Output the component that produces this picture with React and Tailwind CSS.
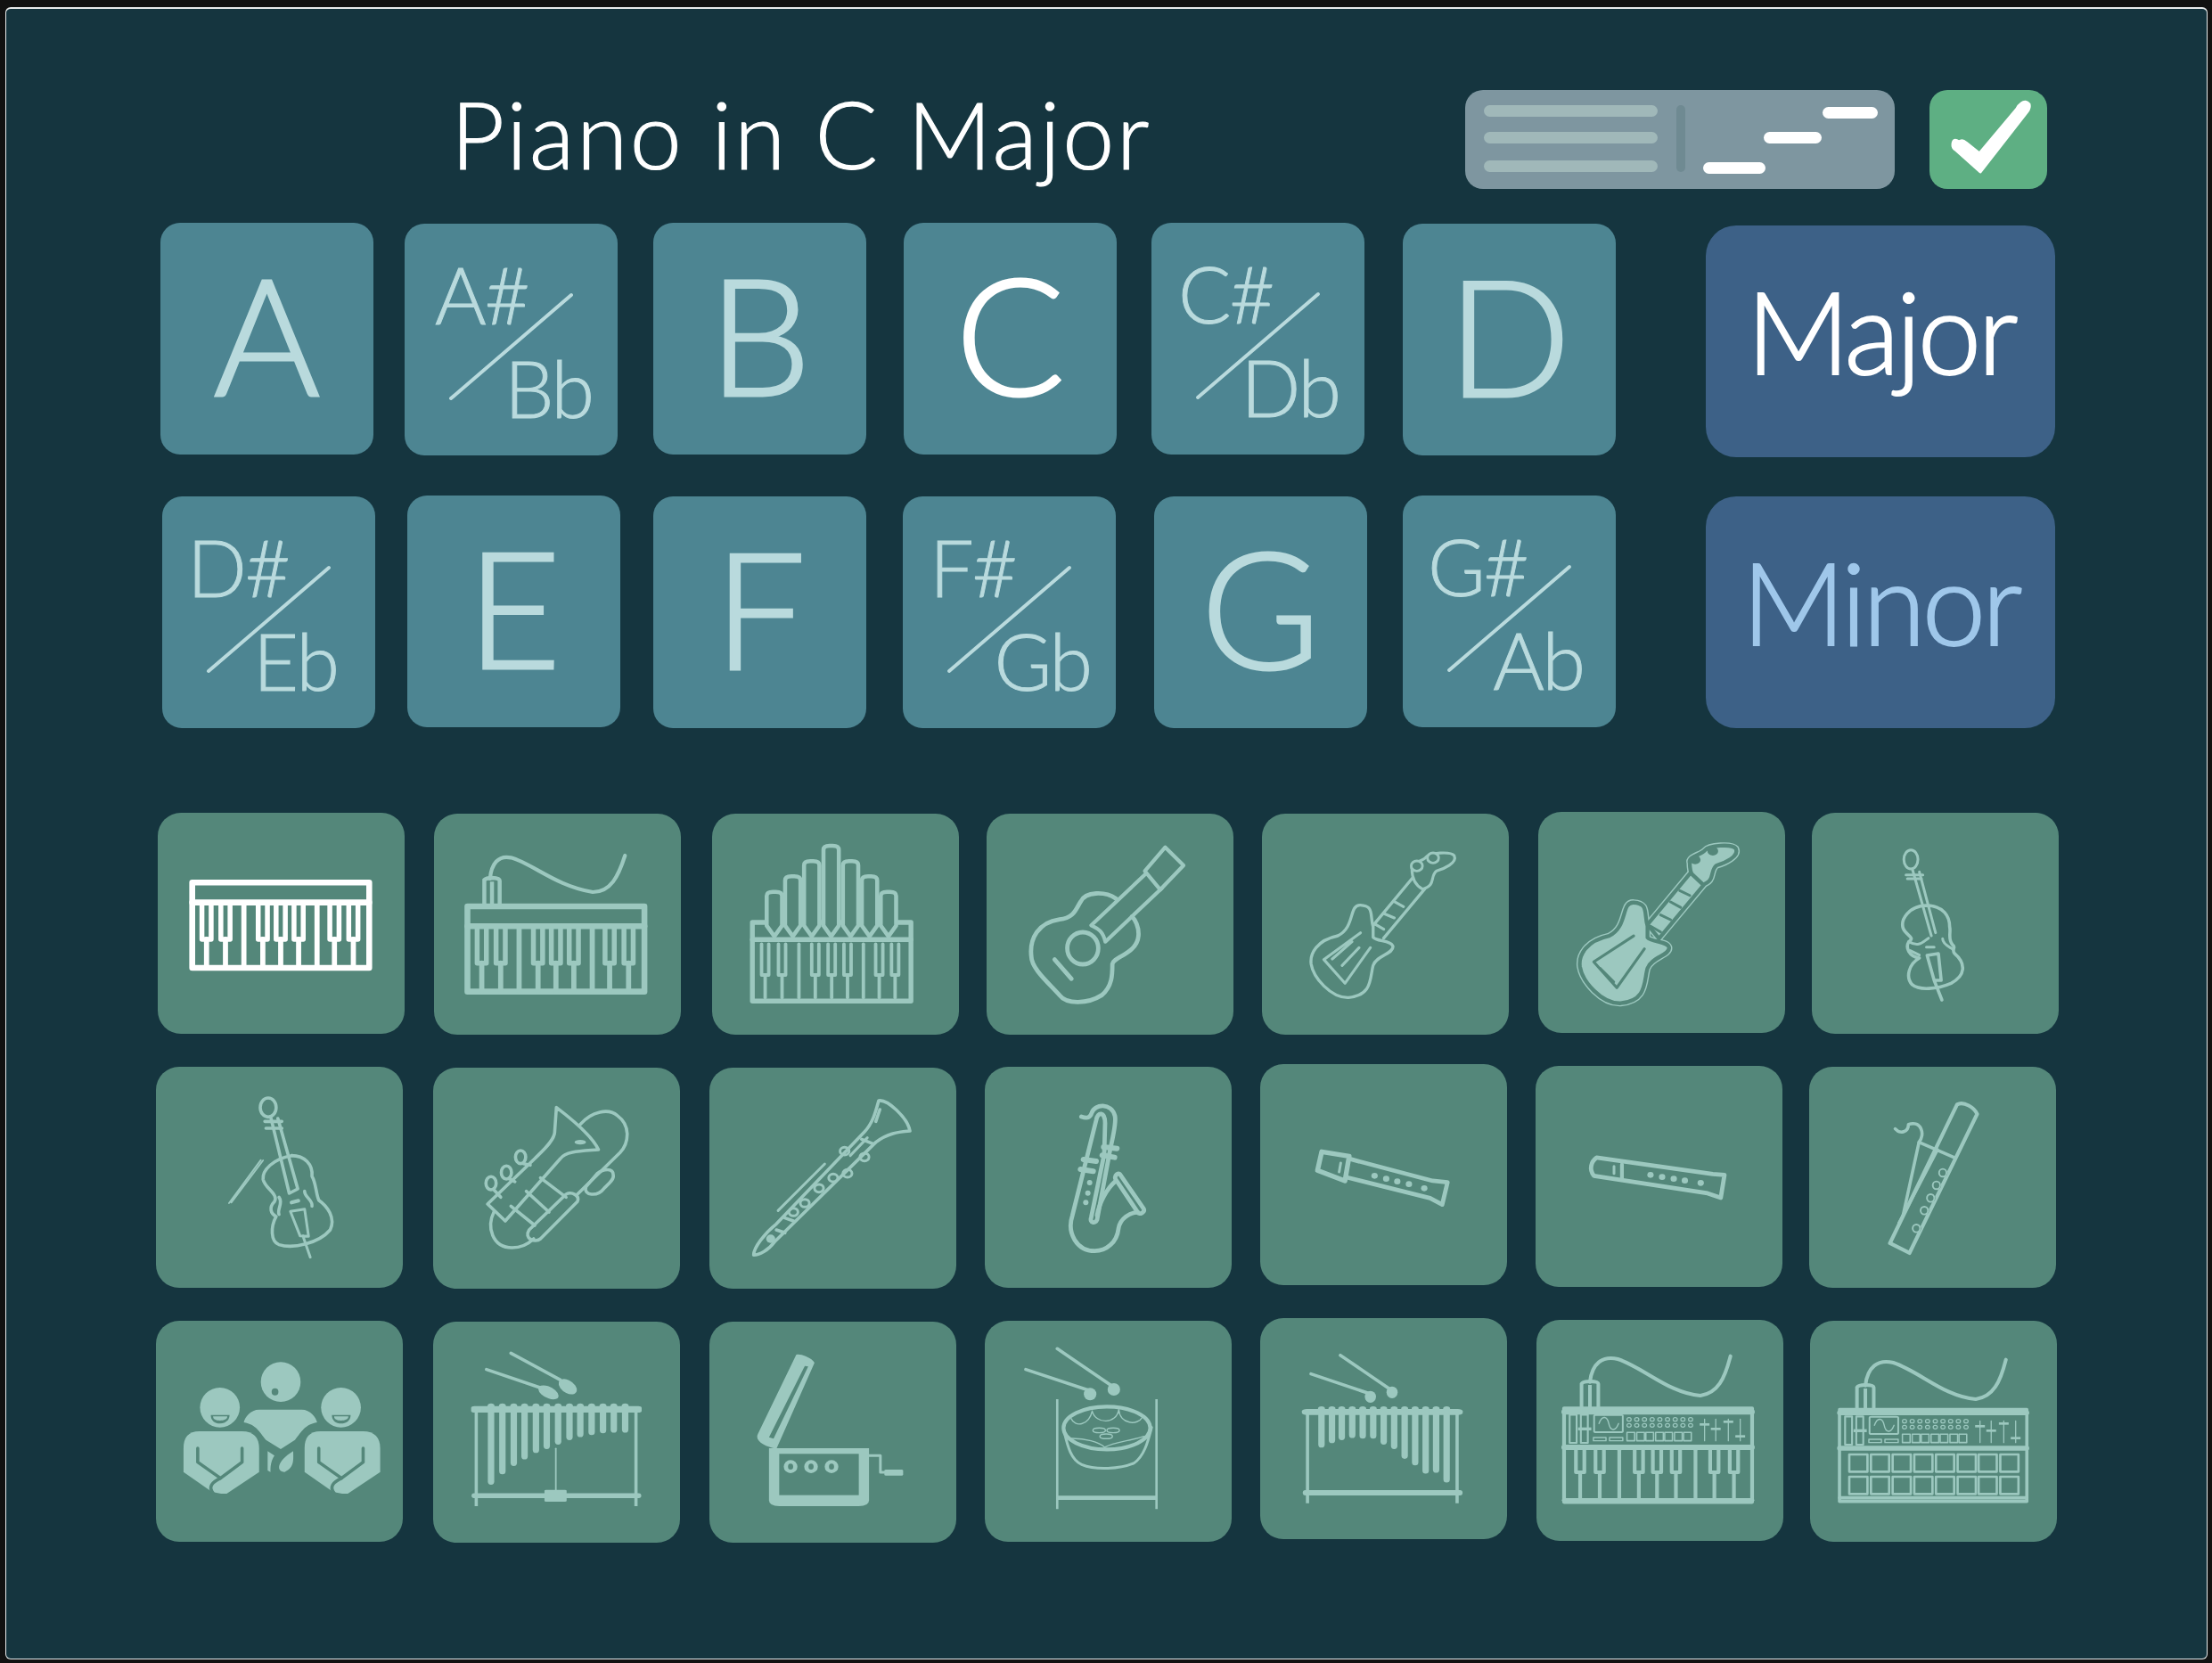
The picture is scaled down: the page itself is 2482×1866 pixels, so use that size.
import React from "react";

const C = "#9cc8bf";
const T = "#54877a";
const K = 1.2;

const P = ({ sw = 3.5, stroke = C, fill = "none", ...r }) => (
  <path vectorEffect="non-scaling-stroke" fill={fill} stroke={fill !== "none" && stroke === C && sw === 3.5 ? "none" : stroke} strokeWidth={sw * K} strokeLinecap="round" strokeLinejoin="round" {...r} />
);
const E = ({ cx, cy, rx, ry, sw = 3, stroke = C, fill = "none", rot }) => (
  <ellipse vectorEffect="non-scaling-stroke" cx={cx} cy={cy} rx={rx} ry={ry} fill={fill} stroke={stroke} strokeWidth={sw * K} transform={rot ? `rotate(${rot} ${cx} ${cy})` : undefined} />
);
const F = ({ cx, cy, rx, ry, fill = C, rot }) => (
  <ellipse cx={cx} cy={cy} rx={rx} ry={ry} fill={fill} transform={rot ? `rotate(${rot} ${cx} ${cy})` : undefined} />
);

const Z3 = "translate(160 900) scale(0.574 0.3333)";
const Z4 = "translate(1090 900) scale(0.7908 0.3333)";
const Z5 = "translate(160 1190) scale(0.6378 0.3333)";
const Z6 = "translate(1400 1190) scale(0.5931 0.3333)";
const Z7 = "translate(160 1470) scale(0.6378 0.3333)";
const Z8 = "translate(1100 1470) scale(0.7844 0.3333)";
const Z11 = "translate(1105 1197) scale(0.3333)";

function Keys({ blacks, plain, top, blackBot, bot, hw, c = C, sw = 4, dsw = 3.5 }) {
  return (
    <g>
      {blacks.map((x) => (
        <g key={x}>
          <P stroke={c} sw={sw} d={`M${x - hw} ${top} V${blackBot} H${x + hw} V${top}`} />
          <P stroke={c} sw={dsw} d={`M${x} ${blackBot} V${bot}`} />
        </g>
      ))}
      {plain.map((x) => (
        <P key={x} stroke={c} sw={dsw} d={`M${x} ${top} V${bot}`} />
      ))}
    </g>
  );
}

function PianoDraw({ c, dx = 0, dy = 0 }) {
  return (
    <g transform={`translate(${dx} ${dy})`}>
      <P stroke={c} sw={5.5} d="M97 271 H443 V558 H97 Z" />
      <P stroke={c} sw={5.5} d="M97 338 H443" />
      <Keys c={c} blacks={[125, 162, 235, 270, 305, 375, 412]} plain={[198, 341]} top={345} blackBot={462} bot={555} hw={9} sw={4.6} dsw={4.8} />
    </g>
  );
}

function Piano() {
  return (
    <g transform={Z3}>
      <PianoDraw c="#ffffff" />
    </g>
  );
}

function Keyboard() {
  return (
    <g transform={Z3}>
      <PianoDraw c={C} dx={538} dy={80} />
      <path d="M668 342 V262 Q672 255 683 255 Q698 256 698 265 V342 M683 268 V342" fill="none" stroke={C} strokeWidth="4.5" vectorEffect="non-scaling-stroke" />
      <P sw={3.5} d="M679 258 C682 208 695 178 720 187 C760 205 810 285 880 303 C915 303 930 250 943 180" />
    </g>
  );
}

function Organ() {
  const pipes = [[1235, 302], [1271, 250], [1308, 199], [1346, 147], [1384, 199], [1421, 250], [1458, 302]];
  return (
    <g transform={Z3}>
      <P sw={4.5} d="M1192 405 H1502 V670 H1192 Z" />
      <P sw={4.5} d="M1192 463 H1502" />
      <P sw={3} d="M1228 387 H1465" strokeDasharray="9 11" strokeLinecap="butt" />
      {pipes.map(([x, y]) => (
        <P key={x} sw={3.8} fill={T} stroke={C} d={`M${x - 15} 416 V${y + 14} Q${x - 15} ${y} ${x - 3} ${y} H${x + 3} Q${x + 15} ${y} ${x + 15} ${y + 14} V416 L${x} 452 Z`} />
      ))}
      <Keys blacks={[1217, 1250, 1315, 1347, 1378, 1440, 1471]} plain={[1283, 1409]} top={478} blackBot={582} bot={658} hw={7} sw={3.2} dsw={3.2} />
    </g>
  );
}

function Guitar() {
  return (
    <g transform={Z4}>
      <P sw={3.5} d="M275 152 L301 213 L268 295 L246 232 Z" />
      <P sw={3.5} d="M248 240 L170 415 C178 425 186 430 190 470 L270 290" />
      <P sw={4} d="M205 325 C190 300 162 300 155 335 C148 360 146 390 125 395 C95 405 82 460 85 520 C85 560 110 610 125 650 C135 682 165 680 185 650 C200 620 200 580 200 545 C202 520 235 510 237 450 C238 420 232 395 228 385" />
      <E cx={158} cy={492} rx={22} ry={54} sw={4} />
      <P sw={4} d="M118 530 L142 595" />
    </g>
  );
}

const BASS_BODY = "M570 420 C565 380 572 350 552 347 C535 345 545 420 520 450 C490 465 480 510 482 545 C485 590 510 660 535 658 C570 650 565 590 570 550 C575 515 600 510 598 485 C595 465 575 470 570 455 Z";
const BASS_HEAD = "M625 225 C622 205 640 200 645 185 C650 170 680 165 685 180 C690 205 670 225 660 232 C650 250 660 280 640 293 C630 280 625 260 625 225 Z";

function Bass() {
  return (
    <g transform={Z4}>
      <P sw={2.6} d={BASS_HEAD} />
      <F cx={632} cy={215} rx={9} ry={19} fill={T} />
      <F cx={655} cy={188} rx={9} ry={19} fill={T} />
      <E cx={632} cy={215} rx={8} ry={17} sw={2.4} />
      <E cx={655} cy={188} rx={8} ry={17} sw={2.4} />
      <P sw={2.8} d="M626 255 L570 415 M643 293 L585 458" />
      <P sw={2.6} d="M600 335 L613 352 M585 375 L600 390 M572 410 L585 428" />
      <P sw={2.8} d={BASS_BODY} />
      <P sw={2.6} d="M552 440 L500 530 L530 610 L566 490 M540 470 L512 528 M550 490 L526 550" />
    </g>
  );
}

function Bass2() {
  const tf = "translate(338 -40) scale(1.09 1.09)";
  return (
    <g transform={Z4}>
      <g transform={tf}>
        <P sw={6} d={BASS_HEAD} />
        <P sw={6} d="M626 255 L570 415 L585 458 L643 293 Z" />
        <P sw={6} d={BASS_BODY} />
        <P sw={3.6} stroke={T} fill={C} d={BASS_HEAD} />
        <P sw={3.6} stroke={T} fill={C} d="M626 255 L570 415 L585 458 L643 293 Z" />
        <P sw={3.6} stroke={T} fill={C} d={BASS_BODY} />
        <F cx={632} cy={215} rx={7} ry={14} fill={T} />
        <F cx={655} cy={188} rx={7} ry={14} fill={T} />
        <P sw={2.5} stroke={T} d="M612 310 L625 325 M600 345 L613 362 M587 385 L600 400 M574 420 L587 438" />
        <P sw={2.6} stroke={T} d="M552 450 L500 530 L530 610 L566 490 M508 550 L526 592" />
      </g>
    </g>
  );
}

function CelloSmall() {
  return (
    <g transform={Z4}>
      <E cx={1333} cy={193} rx={10} ry={32} sw={2.5} />
      <P sw={2.5} d="M1326 245 H1350 M1328 258 H1348" />
      <P sw={2.5} d="M1335 225 L1362 450 M1345 235 L1368 440" />
      <P sw={3} d="M1355 348 C1330 350 1318 395 1322 425 C1326 450 1340 455 1330 470 C1325 490 1330 520 1345 525 C1330 545 1325 590 1335 615 C1345 635 1370 630 1390 610 C1410 585 1412 545 1395 510 C1390 495 1398 490 1392 480 C1385 460 1390 440 1388 420 C1388 385 1380 350 1355 348" />
      <P sw={3} d="M1356 516 L1372 510 L1376 600 L1366 600 Z M1366 600 L1377 666" />
      <P sw={2.5} d="M1330 470 C1345 490 1350 470 1358 458 M1378 460 C1378 480 1390 490 1392 495 M1332 500 L1345 515 M1355 488 H1366" />
    </g>
  );
}

function Cello() {
  return (
    <g transform={Z5}>
      <E cx={221} cy={158} rx={14} ry={32} sw={3} />
      <P sw={3} d="M215 205 H245 M217 228 H245" />
      <P sw={3} d="M226 195 L258 447 L273 432 L238 195" />
      <P sw={3} d="M262 320 C230 330 210 370 212 400 C215 430 240 450 232 475 C222 495 225 515 235 525 C225 560 225 610 240 620 C265 635 310 615 330 570 C340 530 325 490 310 470 C305 450 305 410 298 390 C300 350 285 320 262 320" />
      <P sw={2.5} d="M260 508 L285 500 L292 592 L277 590 Z M282 590 L295 662" />
      <P sw={3} d="M240 460 C248 480 236 500 240 518 M285 440 C285 460 300 470 298 490" />
      <P sw={3.5} d="M262 478 L274 472" />
      <P sw={1.6} d="M208 335 L152 480 M212 336 L156 478" />
    </g>
  );
}

function Euphonium() {
  return (
    <g transform={Z5}>
      <P sw={3} d="M728 158 L725 240 C725 270 700 310 690 330 L607 483 L638 540 L735 330 C745 305 770 305 802 300 C790 250 750 190 728 158 Z" />
      <P sw={3} d="M770 215 C790 170 820 160 835 185 C860 220 855 280 840 310 L765 450" />
      <P sw={3} d="M618 510 C605 560 615 630 650 630 C668 630 680 615 688 600" />
      <P sw={3} d="M680 570 L745 450 C755 440 770 455 765 475 L700 600 C690 615 670 600 680 570 Z" />
      <P sw={3} d="M800 380 C810 365 828 360 828 385 C830 400 820 415 812 430 C800 460 775 455 780 425 Z" />
      <P sw={3} d="M648 490 L690 555 M675 440 L715 510 M700 395 L745 460" />
      <E cx={613} cy={413} rx={9} ry={22} sw={3} />
      <E cx={640} cy={377} rx={9} ry={22} sw={3} />
      <E cx={665} cy={325} rx={9} ry={22} sw={3} />
      <P sw={3} d="M618 435 L630 460 M645 398 L655 408 M670 347 L682 352" />
      <F cx={770} cy={275} rx={10} ry={8} />
    </g>
  );
}

function Clarinet() {
  const holes = [[1235, 305], [1270, 325], [1240, 380], [1215, 395], [1190, 430], [1165, 480], [1145, 510]];
  return (
    <g transform={Z5}>
      <P sw={3} d="M1295 135 C1310 130 1345 190 1350 237 C1330 240 1310 245 1290 275 L1112 610 C1100 640 1085 655 1075 655 C1075 630 1095 580 1115 550 L1270 240 C1285 210 1290 170 1295 135 Z" />
      <P sw={2.5} d="M1200 348 L1118 505 M1275 260 L1245 320" />
      <P sw={3} d="M1290 205 L1297 165 M1265 265 L1285 280 M1130 530 L1145 540 M1115 570 L1130 580" />
      {holes.map(([x, y]) => (
        <E key={x} cx={x} cy={y} rx={8} ry={13} sw={2.5} />
      ))}
      <F cx={1105} cy={600} rx={8} ry={14} />
    </g>
  );
}

function Sax() {
  return (
    <g transform={Z11}>
      <P sw={4} d="M325 168 C345 175 355 172 360 155 C370 125 425 120 438 165 C445 190 425 260 418 300 L378 515 C372 530 352 525 358 508 L402 295 L405 190 C405 150 380 150 375 180 L340 320 L295 500 C275 560 310 620 370 620 C410 620 445 590 450 545 C455 510 490 490 515 490" />
      <P sw={4} d="M378 500 C385 460 410 410 440 385" />
      <P sw={4} d="M455 362 L535 478 C540 490 520 500 515 490 L440 378 C435 365 450 355 455 362 Z" />
      <P sw={5} d="M332 312 L375 318 M322 345 L365 352 M400 270 L445 275 M395 298 L437 305" />
      <F cx={353} cy={390} rx={9} ry={9} />
      <F cx={347} cy={425} rx={9} ry={9} />
      <F cx={340} cy={457} rx={9} ry={9} />
    </g>
  );
}

function Recorder1() {
  return (
    <g transform={Z6}>
      <P sw={4.5} d="M140 307 L192 322 L184 405 L132 370 Z" />
      <P sw={4} d="M195 332 L350 405 L378 410 L368 485 L345 463 L187 393" />
      <P sw={2.5} d="M176 345 L173 375" />
      {[[240, 388], [262, 398], [283, 407], [305, 416], [334, 430]].map(([x, y]) => (
        <F key={x} cx={x} cy={y} rx={6} ry={10} />
      ))}
    </g>
  );
}

function Recorder2() {
  return (
    <g transform={Z6}>
      <P sw={4} d="M660 327 L880 382 L902 385 L895 462 L870 447 L655 388 C645 365 650 340 660 327 Z" />
      <P sw={3.5} d="M708 350 L708 396" />
      <P sw={2.5} d="M693 356 L693 380" />
      {[[762, 385], [784, 392], [806, 398], [827, 404], [857, 412]].map(([x, y]) => (
        <F key={x} cx={x} cy={y} rx={6} ry={10} />
      ))}
    </g>
  );
}

function Bassoon() {
  return (
    <g transform={Z6}>
      <P sw={3.5} d="M1342 148 C1355 135 1375 160 1380 180 L1252 648 L1215 615 Z" />
      <P sw={3} d="M1225 230 C1235 250 1250 240 1250 215 C1275 200 1282 250 1270 275 L1240 520" />
      <P sw={3} d="M1270 275 L1336 326 M1305 300 L1232 548" />
      {[[1315, 378], [1303, 420], [1292, 463], [1280, 505], [1265, 565]].map(([x, y]) => (
        <g key={x}>
          <F cx={x} cy={y} rx={9} ry={15} fill={T} />
          <E cx={x} cy={y} rx={7} ry={13} sw={1.6} />
        </g>
      ))}
    </g>
  );
}

function Person({ dx }) {
  return (
    <g transform={`translate(${dx} 0)`}>
      <F cx={136} cy={328} rx={35} ry={67} />
      <path d="M120 353 H153 C153 372 145 382 136 382 C127 382 120 372 120 353 Z" fill={T} />
      <path d="M124 358 H149 C149 368 143 372 136 372 C129 372 124 368 124 358 Z" fill={C} />
      <path d="M100 408 H175 C195 408 205 430 205 465 V545 L148 618 H138 L122 612 L72 545 V465 C72 430 80 408 100 408 Z" fill={C} />
      <P stroke={T} sw={3} d="M97 465 V512 L137 566 L175 512 V465" />
      <P stroke={T} sw={3} d="M137 566 C122 580 115 595 124 616" />
    </g>
  );
}

function Choir() {
  return (
    <g transform={Z7}>
      <F cx={243} cy={242} rx={35} ry={67} />
      <F cx={233} cy={275} rx={6} ry={12} fill={T} />
      <path d="M205 335 H280 C295 335 305 360 307 378 C285 385 280 410 268 437 L243 468 L217 437 C205 410 200 385 178 378 C180 360 190 335 205 335 Z" fill={C} />
      <path d="M220 475 L232 490 C225 510 225 530 225 545 L220 540 Z M265 475 C265 500 268 530 250 545 C235 545 235 510 265 475 Z" fill={C} />
      <Person dx={0} />
      <Person dx={213} />
    </g>
  );
}

function Vibes() {
  const bars = [[613, 585], [633, 550], [653, 522], [672, 500], [692, 478], [711, 465], [731, 450], [751, 435], [770, 425], [790, 418], [810, 412], [829, 410], [849, 410]];
  return (
    <g transform={Z7}>
      <P sw={3} d="M648 145 L735 235 M605 200 L705 265" />
      <F cx={748} cy={258} rx={14} ry={27} rot={-20} />
      <F cx={714} cy={277} rx={14} ry={26} rot={-30} />
      <rect x="578" y="323" width="300" height="22" rx="6" fill={C} />
      {bars.map(([x]) => (
        <F key={x} cx={x} cy={322} rx={6} ry={8} />
      ))}
      <P sw={3} strokeLinecap="butt" d="M587 330 V660 M868 330 V660" />
      {bars.map(([x, y]) => (
        <P key={x} sw={6} d={`M${x} 340 V${y - 8}`} />
      ))}
      <P sw={1.5} d="M727 466 V610" />
      <P sw={4.5} d="M583 625 H873" />
      <rect x="707" y="605" width="39" height="40" rx="3" fill={C} />
    </g>
  );
}

function MusicBox() {
  return (
    <g transform={Z7}>
      <path d="M1150 150 C1160 145 1180 165 1182 178 L1115 467 C1095 460 1075 440 1083 415 Z" fill={C} />
      <path d="M1165 188 L1102 428 L1110 433 L1171 190 Z" fill={T} />
      <path d="M1102 465 H1278 V640 Q1278 660 1260 660 H1120 Q1102 660 1102 640 Z" fill={C} />
      <rect x="1120" y="484" width="140" height="139" fill={T} />
      {[1140, 1176, 1212].map((x) => (
        <g key={x}>
          <F cx={x} cy={527} rx={12} ry={22} />
          <F cx={x} cy={527} rx={4.5} ry={10} fill={T} />
        </g>
      ))}
      <P sw={2.5} d="M1278 490 H1298 V546 H1310" />
      <rect x="1305" y="537" width="33" height="20" rx="3" fill={C} />
    </g>
  );
}

function SteelPan() {
  return (
    <g transform={Z8}>
      <P sw={3} d="M110 130 L188 255 M65 200 L155 270" />
      <F cx={191} cy={267} rx={9} ry={21} />
      <F cx={157} cy={283} rx={9} ry={21} />
      <P sw={2.2} strokeLinecap="butt" d="M110 300 V670 M252 300 V670" />
      <P sw={4} strokeLinecap="butt" d="M110 632 H252" />
      <P sw={2.5} d="M120 410 C125 460 130 505 145 520 C165 540 200 535 220 515 C235 490 240 440 245 395" />
      <E cx={181} cy={397} rx={62} ry={72} sw={3.5} />
      <P sw={1.2} d="M130 365 C135 395 155 390 160 340 C165 385 195 385 198 335 C200 385 225 390 232 360 M128 432 C150 430 170 445 178 462 C190 445 215 440 234 425" />
      <E cx={170} cy={405} rx={9} ry={8} sw={1.2} />
      <E cx={190} cy={405} rx={9} ry={8} sw={1.2} />
      <E cx={180} cy={425} rx={9} ry={8} sw={1.2} />
    </g>
  );
}

function Vibes2() {
  const bars = [[488, 460], [503, 445], [517, 435], [532, 428], [547, 430], [562, 430], [577, 450], [592, 465], [607, 498], [622, 520], [637, 548], [652, 545], [667, 578]];
  return (
    <g transform={Z8}>
      <P sw={3} d="M515 152 L585 265 M473 215 L555 280" />
      <F cx={589} cy={277} rx={8} ry={20} />
      <F cx={558} cy={292} rx={8} ry={20} />
      <rect x="460" y="333" width="230" height="20" rx="7" fill={C} />
      {bars.map(([x]) => (
        <F key={x} cx={x} cy={332} rx={5} ry={8} />
      ))}
      <P sw={3} strokeLinecap="butt" d="M468 345 V650 M682 345 V650" />
      {bars.map(([x, y]) => (
        <P key={x} sw={6} d={`M${x} 348 V${y - 8}`} />
      ))}
      <P sw={5} d="M465 615 H686" />
    </g>
  );
}

function SynthPanel() {
  const dots = [928, 939, 950, 961, 972, 983, 994, 1005, 1016];
  return (
    <g>
      <P sw={1.8} d="M843 352 H853 V447 H843 Z M859 352 H869 V447 H859 Z" />
      <rect x="855" y="395" width="19" height="10" fill={C} />
      <rect x="878" y="353" width="41" height="58" rx="3" fill="none" stroke={C} strokeWidth="2" vectorEffect="non-scaling-stroke" />
      <P sw={1.2} d="M885 382 C890 350 897 360 899 382 C901 405 908 412 913 382" />
      {dots.map((x) => (
        <g key={x}>
          <E cx={x} cy={368} rx={3} ry={6} sw={1} />
          <E cx={x} cy={388} rx={3} ry={6} sw={1} />
        </g>
      ))}
      <P sw={1.2} d="M877 429 H895 V440 H877 Z M900 429 H919 V440 H900 Z" />
      {[925, 939, 952, 966, 979, 993, 1006].map((x) => (
        <P key={x} sw={1.3} d={`M${x} 412 H${x + 11} V440 H${x} Z`} />
      ))}
      <P sw={1.1} d="M1036 367 V440 M1052 367 V440 M1070 367 V440 M1087 367 V440" />
      <rect x="1029" y="381" width="14" height="8" fill={C} />
      <rect x="1045" y="396" width="14" height="8" fill={C} />
      <rect x="1063" y="372" width="14" height="8" fill={C} />
      <rect x="1080" y="421" width="14" height="8" fill={C} />
    </g>
  );
}

function Cable() {
  return (
    <g>
      <path d="M860 328 V248 Q862 240 872 240 Q884 240 884 248 V328 M872 252 V328" fill="none" stroke={C} strokeWidth="4" vectorEffect="non-scaling-stroke" />
      <P sw={3.4} d="M872 242 C875 180 890 152 912 165 C950 195 985 280 1030 288 C1055 280 1065 230 1073 155" />
    </g>
  );
}

function Synth() {
  return (
    <g transform={Z8}>
      <Cable />
      <P sw={3.5} d="M835 331 H1104 V646 H835 Z" />
      <P sw={5} d="M835 343 H1104 M835 462 H1104" />
      <P sw={4} d="M835 640 H1104" />
      <SynthPanel />
      <Keys blacks={[858, 886, 942, 968, 995, 1050, 1078]} plain={[914, 1023]} top={472} blackBot={546} bot={632} hw={6} sw={3.5} dsw={3.5} />
    </g>
  );
}

function SynthPads() {
  const xs = [1243, 1274, 1305, 1336, 1367, 1398, 1428, 1459];
  return (
    <g transform={Z8}>
      <g transform="translate(394 12)">
        <Cable />
      </g>
      <P sw={3} d="M1229 335 H1497 V644 H1229 Z" />
      <P sw={4.5} d="M1229 346 H1497 M1229 465 H1497" />
      <P sw={3} d="M1229 632 H1497" />
      <g transform="translate(394 6)">
        <SynthPanel />
      </g>
      {xs.map((x) => (
        <g key={x}>
          <P sw={2.2} d={`M${x} 486 H${x + 26} V544 H${x} Z`} />
          <P sw={2.2} d={`M${x} 561 H${x + 26} V619 H${x} Z`} />
        </g>
      ))}
    </g>
  );
}

function IconTile({ cls, box, children }) {
  return (
    <div className={`h-[248px] w-[277px] shrink-0 overflow-hidden rounded-[26px] bg-[#54877a] ${cls}`}>
      <svg className="block h-full w-full" viewBox={box}>
        {children}
      </svg>
    </div>
  );
}

function NoteTile({ cls, children, white }) {
  return (
    <div className={`flex h-[260px] w-[239px] shrink-0 items-center justify-center rounded-[22px] bg-[#4d8592] pb-[12px] text-[182px] leading-none font-light [-webkit-text-stroke-width:3px] ${white ? "text-white" : "text-[#b9dadd]"} ${cls}`}>
      {children}
    </div>
  );
}

function SplitTile({ cls, top, bottom, pad }) {
  return (
    <div className={`relative flex h-[260px] w-[239px] shrink-0 flex-col justify-between rounded-[22px] bg-[#4d8592] pt-[35px] pb-[32px] text-[88px] leading-none font-light tracking-[-2px] text-[#b9dadd] [-webkit-text-stroke-width:1px] ${pad} ${cls}`}>
      <span className="self-start">{top}</span>
      <span className="self-end">{bottom}</span>
      <svg className="absolute top-0 left-0 h-full w-full" viewBox="0 0 239 260">
        <path d="M187 80 L52 196" stroke="#b9dadd" strokeWidth="4" strokeLinecap="round" fill="none" />
      </svg>
    </div>
  );
}

function ModeTile({ cls, text, tone }) {
  return (
    <div className={`flex h-[260px] w-[392px] shrink-0 items-center justify-center rounded-[34px] bg-[#3d6187] pb-[24px] text-[128px] leading-none font-light tracking-[-4px] [-webkit-text-stroke-width:2px] ${tone} ${cls}`}>
      {text}
    </div>
  );
}

export default function App() {
  return (
    <div className="h-[1866px] w-[2482px] bg-[#111111] pt-[8px] pr-[5px] pb-[4px] pl-[6px] font-['Lato','Noto_Sans',sans-serif]">
      <div className="h-[1854px] overflow-hidden rounded-[6px] border border-t-2 border-white/90 bg-[#15353f]">
        <div className="mt-[91px] flex items-start">
          <div className="ml-[499px] w-[1138px] text-[104px] leading-[97px] font-light tracking-[2.6px] text-white [-webkit-text-stroke-width:1.2px]">Piano in C Major</div>
          <div className="flex h-[111px] w-[482px] shrink-0 items-start rounded-[20px] bg-[#7e96a0] pt-[17px] pl-[21px]">
            <div className="flex w-[195px] flex-col">
              <div className="h-[13px] rounded-full bg-[#a0b8b9]" />
              <div className="mt-[17px] h-[13px] rounded-full bg-[#a0b8b9]" />
              <div className="mt-[19px] h-[13px] rounded-full bg-[#a0b8b9]" />
            </div>
            <div className="mt-[0px] ml-[21px] h-[75px] w-[10px] rounded-full bg-[#6f8a92]" />
            <div className="ml-[20px] flex w-[196px] flex-col items-start pt-[2px]">
              <div className="ml-[134px] h-[13px] w-[62px] rounded-full bg-white" />
              <div className="mt-[15px] ml-[68px] h-[13px] w-[65px] rounded-full bg-white" />
              <div className="mt-[21px] h-[13px] w-[70px] rounded-full bg-white" />
            </div>
          </div>
          <div className="ml-[39px] flex h-[111px] w-[132px] shrink-0 rounded-[20px] bg-[#5eaf83]">
            <svg className="block h-full w-full" viewBox="0 0 132 111">
              <path d="M33 58 Q26 53 26 62 Q26 65 29 67 L57 92 L110 24 Q113 20 112 16 Q108 11 103 15 Q100 17 98 21 L56 71 L41 59 Q37 55 33 58 Z" fill="#ffffff" stroke="#ffffff" strokeWidth="3" strokeLinejoin="round" />
            </svg>
          </div>
        </div>

        <div className="mt-[38px] flex items-start">
          <NoteTile cls="ml-[173px]">A</NoteTile>
          <SplitTile cls="mt-[1px] ml-[35px]" pad="pl-[34px] pr-[28px]" top="A#" bottom="Bb" />
          <NoteTile cls="ml-[40px]">B</NoteTile>
          <NoteTile cls="ml-[42px]" white>C</NoteTile>
          <SplitTile cls="ml-[39px]" pad="pl-[30px] pr-[28px]" top="C#" bottom="Db" />
          <NoteTile cls="mt-[1px] ml-[43px]">D</NoteTile>
          <ModeTile cls="mt-[3px] ml-[101px]" text="Major" tone="text-white" />
        </div>

        <div className="mt-[43px] flex items-start">
          <SplitTile cls="mt-[1px] ml-[175px]" pad="pl-[28px] pr-[42px]" top="D#" bottom="Eb" />
          <NoteTile cls="ml-[36px]">E</NoteTile>
          <NoteTile cls="mt-[1px] ml-[37px]">F</NoteTile>
          <SplitTile cls="mt-[1px] ml-[41px]" pad="pl-[30px] pr-[28px]" top="F#" bottom="Gb" />
          <NoteTile cls="mt-[1px] ml-[43px]">G</NoteTile>
          <SplitTile cls="ml-[40px]" pad="pl-[28px] pr-[36px]" top="G#" bottom="Ab" />
          <ModeTile cls="mt-[1px] ml-[101px]" text="Minor" tone="text-[#9fc7ea]" />
        </div>

        <div className="mt-[94px] flex items-start">
          <IconTile cls="mt-[1px] ml-[170px]" box="177 912 277 248"><Piano /></IconTile>
          <IconTile cls="mt-[2px] ml-[33px]" box="487 913 277 248"><Keyboard /></IconTile>
          <IconTile cls="mt-[2px] ml-[35px]" box="799 913 277 248"><Organ /></IconTile>
          <IconTile cls="mt-[2px] ml-[31px]" box="1107 913 277 248"><Guitar /></IconTile>
          <IconTile cls="mt-[2px] ml-[32px]" box="1416 913 277 248"><Bass /></IconTile>
          <IconTile cls="ml-[33px]" box="1726 911 277 248"><Bass2 /></IconTile>
          <IconTile cls="mt-[1px] ml-[30px]" box="2033 912 277 248"><CelloSmall /></IconTile>
        </div>

        <div className="mt-[33px] flex items-start">
          <IconTile cls="mt-[3px] ml-[168px]" box="175 1197 277 248"><Cello /></IconTile>
          <IconTile cls="mt-[4px] ml-[34px]" box="486 1198 277 248"><Euphonium /></IconTile>
          <IconTile cls="mt-[4px] ml-[33px]" box="796 1198 277 248"><Clarinet /></IconTile>
          <IconTile cls="mt-[3px] ml-[32px]" box="1105 1197 277 248"><Sax /></IconTile>
          <IconTile cls="ml-[32px]" box="1414 1194 277 248"><Recorder1 /></IconTile>
          <IconTile cls="mt-[2px] ml-[32px]" box="1723 1196 277 248"><Recorder2 /></IconTile>
          <IconTile cls="mt-[3px] ml-[30px]" box="2030 1197 277 248"><Bassoon /></IconTile>
        </div>

        <div className="mt-[33px] flex items-start">
          <IconTile cls="mt-[3px] ml-[168px]" box="175 1482 277 248"><Choir /></IconTile>
          <IconTile cls="mt-[4px] ml-[34px]" box="486 1483 277 248"><Vibes /></IconTile>
          <IconTile cls="mt-[4px] ml-[33px]" box="796 1483 277 248"><MusicBox /></IconTile>
          <IconTile cls="mt-[3px] ml-[32px]" box="1105 1482 277 248"><SteelPan /></IconTile>
          <IconTile cls="ml-[32px]" box="1414 1479 277 248"><Vibes2 /></IconTile>
          <IconTile cls="mt-[2px] ml-[33px]" box="1724 1481 277 248"><Synth /></IconTile>
          <IconTile cls="mt-[3px] ml-[30px]" box="2031 1482 277 248"><SynthPads /></IconTile>
        </div>
      </div>
    </div>
  );
}
